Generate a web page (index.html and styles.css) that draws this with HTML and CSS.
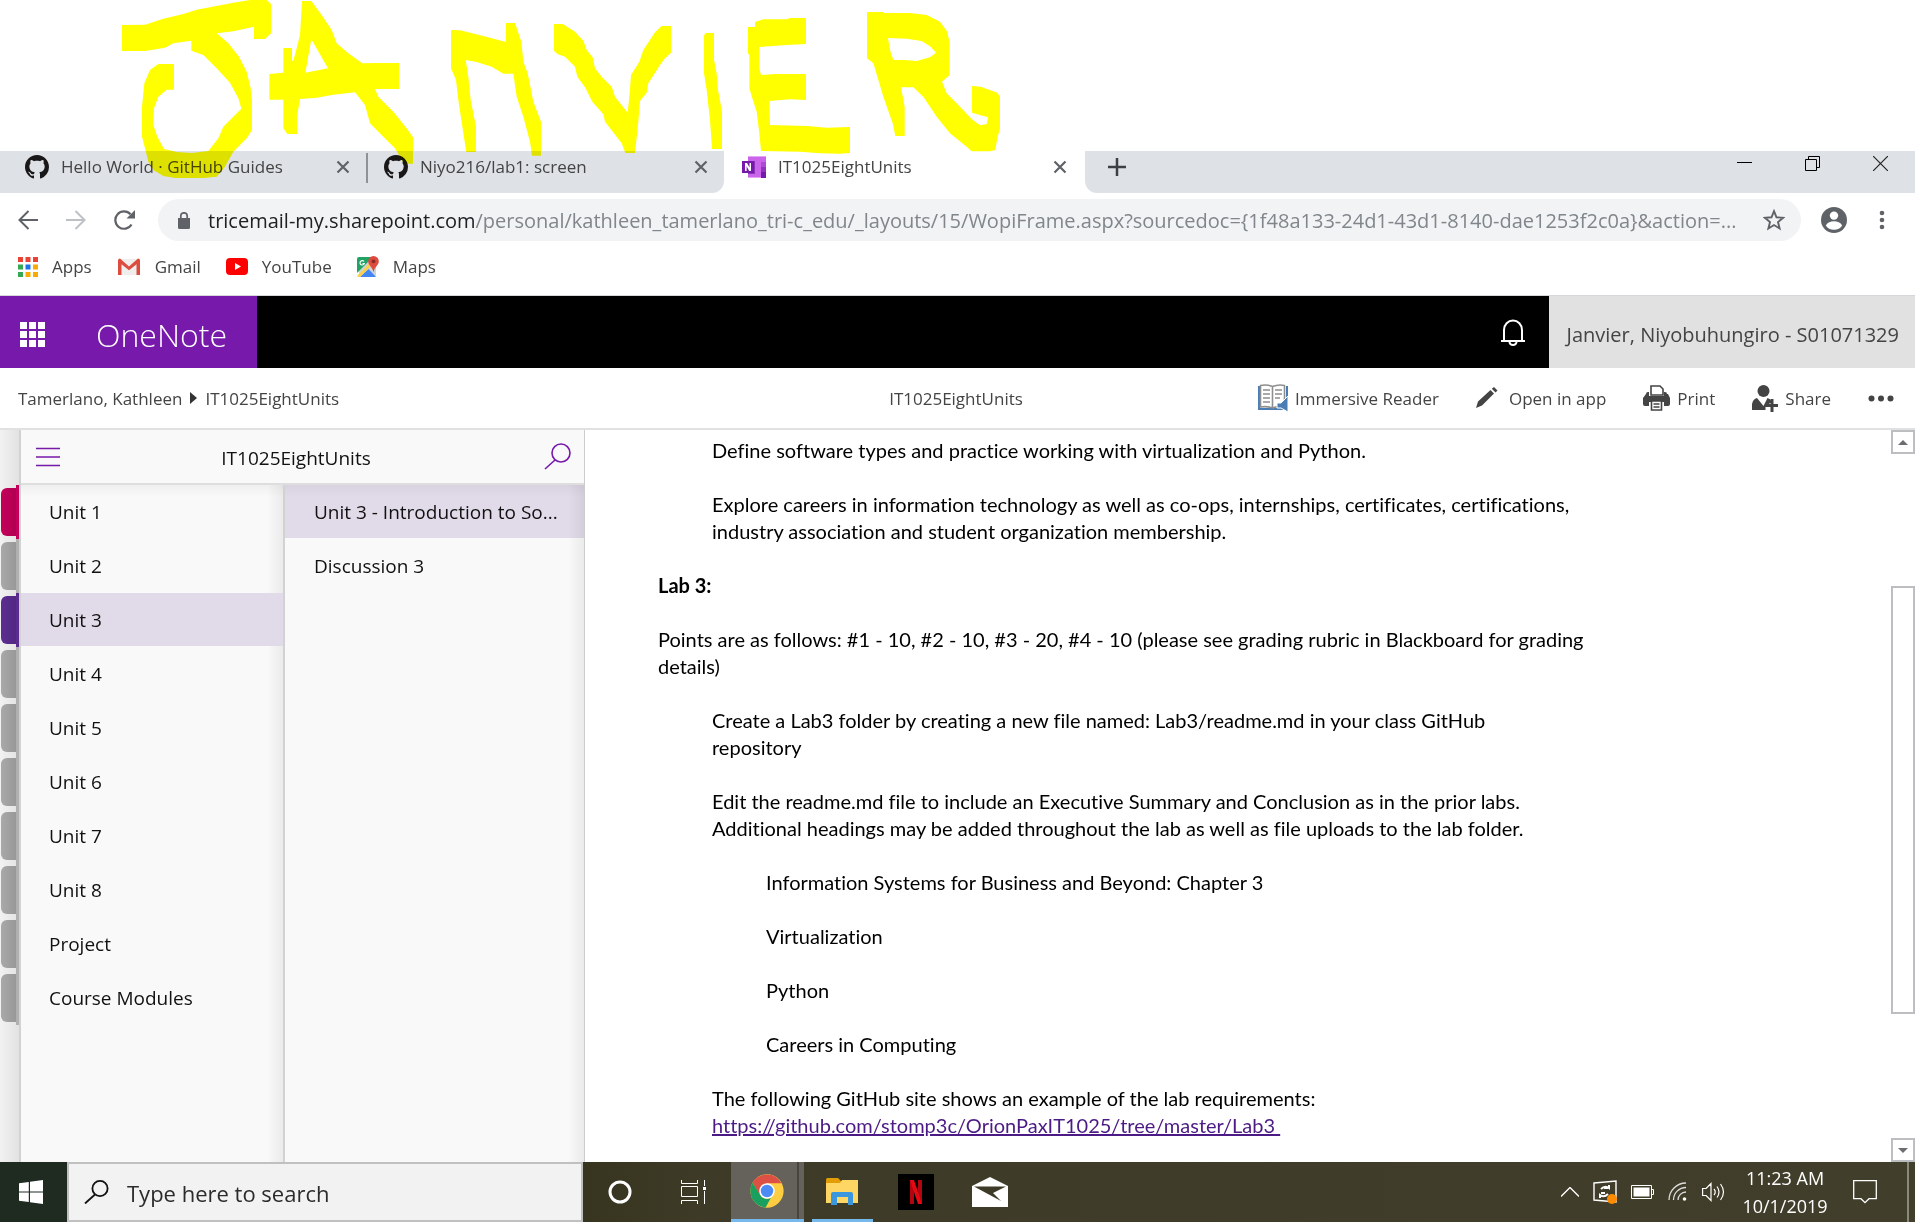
FILE: index.html
```html
<!DOCTYPE html>
<html lang="en">
<head>
<meta charset="utf-8">
<title>IT1025EightUnits</title>
<link rel="stylesheet" href="styles.css">
</head>
<body>
<svg width="0" height="0" class="sprite" aria-hidden="true">
  <symbol id="github" viewBox="0 0 16 16"><path fill="#191717" d="M8 0C3.58 0 0 3.58 0 8c0 3.54 2.29 6.53 5.47 7.59.4.07.55-.17.55-.38 0-.19-.01-.82-.01-1.49-2.01.37-2.53-.49-2.69-.94-.09-.23-.48-.94-.82-1.13-.28-.15-.68-.52-.01-.53.63-.01 1.08.58 1.23.82.72 1.21 1.87.87 2.33.66.07-.52.28-.87.51-1.07-1.78-.2-3.64-.89-3.64-3.95 0-.87.31-1.59.82-2.15-.08-.2-.36-1.02.08-2.12 0 0 .67-.21 2.2.82.64-.18 1.32-.27 2-.27s1.36.09 2 .27c1.53-1.04 2.2-.82 2.2-.82.44 1.1.16 1.92.08 2.12.51.56.82 1.27.82 2.15 0 3.07-1.87 3.75-3.65 3.95.29.25.54.73.54 1.48 0 1.07-.01 1.93-.01 2.2 0 .21.15.46.55.38A8.01 8.01 0 0 0 16 8c0-4.42-3.58-8-8-8z"/></symbol>
  <symbol id="cross" viewBox="0 0 14 14"><path d="M1.500 1.500l11 11M12.500 1.500l-11 11" stroke="#5f6368" stroke-width="2.200" fill="none"/></symbol>
</svg>

<svg class="ink" viewBox="0 0 2745 600" aria-hidden="true">
  <g fill="#ff0" fill-rule="evenodd">
    <path d="M66 75L135 74 190 56 250 42 290 29 400 8 450 0H500L513 12V100L495 117H462V80L400 94 350 100 385 130 417 170 440 215 452 265 456 300V390L440 415 400 455 375 500 350 530 310 534H225L190 528 160 510 145 485 135 445 126 410V320L133 250 150 210 175 192H222V269H200L175 290 162 325 159 372 172 410 192 447 230 456 275 459 325 453 355 415 370 380 424 326 415 295 390 248 350 205 310 165 274 152V122L220 130 195 143 135 153H66z"/>
    <path d="M606 3H634L665 45 695 90 710 130 745 160 787 190 830 189H897V267H825L835 290 880 335 920 385 939 412V491H912L885 445 850 410 810 370 795 315 765 277 700 284 650 293 600 297 591 350V402H562L550 385V299H508V222L550 218V144H576V182H580L590 145 600 105zM634 118L684 205 616 218z"/>
    <path d="M1053 90L1080 91 1150 108 1218 126V69H1245L1264 125 1270 185 1283 220 1300 305 1323 365V467H1296L1290 425 1270 350 1250 290 1240 221H1210L1175 200 1130 186 1097 180 1105 230 1112 300 1128 380V456H1099L1090 400 1075 300 1068 240 1053 205z"/>
    <g transform="translate(1380)">
      <path d="M-18 72H8L45 95 70 122 80 150 98 172 105 205 125 230 155 260 165 290 203 338 208 290 213 225 238 185 250 150 285 97 305 78H333V158L315 175 300 195 265 250 260 278 240 303 235 365 225 459H196L185 430 135 365 130 343 97 305 75 262 52 230 45 200 15 170-8 162-18 152z"/>
      <path d="M436 99H462V180L470 220 474 270 486 335V447H456L450 360 440 270 432 220V108z"/>
      <path d="M564 81H585V66L610 58H680L690 54H738V132L680 135 598 141V205L603 225 645 222H738V300L690 298 628 303 630 375 742 378 800 383 870 381V459L840 461 780 460 720 455 603 453 598 400 590 335 577 295 568 265V165L564 160z"/>
      <path d="M921 36H970L972 39H1050L1100 45 1140 65 1162 95 1169 130V225L1146 245 1160 280 1195 315 1235 357 1260 376 1280 372 1284 352 1262 346 1236 338V258L1262 260 1312 278 1320 290V385L1312 415 1306 450 1290 454H1235L1220 440 1170 400 1130 350 1090 290 1060 262H1023L1034 320V408H1006L998 370 970 290 940 190 921 175zM984 114L1040 116 1085 123 1112 140 1128 158 1110 172 1070 183 1035 180H1000L990 150z"/>
    </g>
  </g>
</svg>

<header class="browser">
  <div class="tabstrip">
    <div class="tab tab-first">
      <svg class="favicon"><use href="#github"/></svg>
      <a class="tab-title" href="#">Hello World · GitHub Guides</a>
      <button class="close" aria-label="Close tab"><svg width="14" height="14"><use href="#cross"/></svg></button>
    </div>
    <div class="tab tab-second">
      <svg class="favicon"><use href="#github"/></svg>
      <a class="tab-title" href="#">Niyo216/lab1: screen</a>
      <button class="close" aria-label="Close tab"><svg width="14" height="14"><use href="#cross"/></svg></button>
    </div>
    <div class="tab tab-active">
      <svg class="favicon" viewBox="0 0 24 24"><path fill="#ca64ea" d="M6 1h18v22H6z"/><path fill="#e3a4f5" d="M6 1h18v1H6zM6 22h13v1H6z"/><path fill="#ae4bd5" d="M19 7h5v5h-5z"/><path fill="#9332bf" d="M19 12h5v5h-5z"/><path fill="#7719aa" d="M19 17h5v6h-5z"/><path fill="#8d34bd" d="M6 6h7v13H6z"/><path fill="#7719aa" d="M0 6h12v12H0z"/><path fill="#fff" d="M3 8h2l2.500 4.500V8H9v8H7.200L4.600 11.300V16H3z"/></svg>
      <a class="tab-title" href="#">IT1025EightUnits</a>
      <button class="close" aria-label="Close tab"><svg width="14" height="14"><use href="#cross"/></svg></button>
    </div>
    <div class="tab-rest">
      <button aria-label="New tab"><svg width="18" height="18"><path d="M9 0v18M0 9h18" stroke="#3c4043" stroke-width="2.500"/></svg></button>
      <div class="window-buttons">
        <button aria-label="Minimize"><svg width="15" height="15"><path d="M0 6.500h15" stroke="#000"/></svg></button>
        <button aria-label="Restore"><svg width="15" height="15" fill="none" stroke="#000"><path d="M.500 3.500h11v11H.500zM3.500 3V.500h11v11H12"/></svg></button>
        <button aria-label="Close"><svg width="15" height="15"><path d="M0 0l15 15M15 0L0 15" stroke="#222" stroke-width="1.200"/></svg></button>
      </div>
    </div>
  </div>

  <div class="toolbar">
    <button aria-label="Back"><svg width="20" height="20" fill="none" stroke="#5f6368" stroke-width="2"><path d="M20 10H2M10.500 1L1.500 10l9 9"/></svg></button>
    <button aria-label="Forward"><svg width="20" height="20" fill="none" stroke="#bdc1c6" stroke-width="2"><path d="M0 10h18M9.500 1l9 9-9 9"/></svg></button>
    <button aria-label="Reload"><svg width="22" height="20"><path d="M17.500 14.500A8.700 8.700 0 1 1 16.500 4.200" fill="none" stroke="#5f6368" stroke-width="2.200"/><path d="M21 0v8.500h-8.500z" fill="#5f6368"/></svg></button>
    <div class="address">
      <svg width="12" height="17"><path d="M0 6h12v9.500q0 1.500-1.500 1.500h-9Q0 17 0 15.500z" fill="#5f6368"/><path d="M2.800 7V4a3.200 3.200 0 0 1 6.400 0v3" fill="none" stroke="#5f6368" stroke-width="1.700"/></svg>
      <div class="url" role="textbox" aria-label="Address" contenteditable="true" spellcheck="false"><span class="host">tricemail-my.sharepoint.com</span>/personal/kathleen_tamerlano_tri-c_edu/_layouts/15/WopiFrame.aspx?sourcedoc={1f48a133-24d1-43d1-8140-dae1253f2c0a}&amp;action=...</div>
      <button aria-label="Bookmark"><svg width="22" height="22" viewBox="0 0 22 22"><path d="M11 2.200l2.500 6.100 6.600.500-5.100 4.300 1.600 6.400L11 16l-5.600 3.500L7 13.100 1.900 8.800l6.600-.500z" fill="none" stroke="#5f6368" stroke-width="1.900"/></svg></button>
    </div>
    <button class="profile" aria-label="Profile"><svg width="26" height="26"><circle cx="13" cy="13" r="13" fill="#5f6368"/><circle cx="13" cy="8.600" r="4.200" fill="#fff"/><path d="M4.800 18.500c1.500-3 5-4.300 8.200-4.300s6.700 1.300 8.200 4.300A9.800 9.800 0 0 1 13 22.800a9.800 9.800 0 0 1-8.200-4.300z" fill="#fff"/></svg></button>
    <button aria-label="Menu"><svg width="6" height="20" fill="#5f6368"><circle cx="3" cy="3" r="2.300"/><circle cx="3" cy="10" r="2.300"/><circle cx="3" cy="17" r="2.300"/></svg></button>
  </div>

  <nav class="bookmarks">
    <a href="#"><svg width="20" height="20"><path fill="#ea4335" d="M0 0h5v5H0zM7.500 0h5v5h-5zM15 0h5v5h-5z"/><path fill="#34a853" d="M0 7.500h5v5H0zM0 15h5v5H0z"/><path fill="#1a73e8" d="M7.500 7.500h5v5h-5z"/><path fill="#f9ab00" d="M15 7.500h5v5h-5zM7.500 15h5v5h-5zM15 15h5v5h-5z"/></svg>Apps</a>
    <a href="#"><svg width="24" height="18"><path fill="#f0eded" d="M3 1h18v16H3z"/><path fill="#dd4b3e" d="M1 17V2.500Q1 .500 3 .500L12 8.500l9-8q2 0 2 2V17h-3.500V6.200L12 12.300 4.500 6.200V17z"/></svg>Gmail</a>
    <a href="#"><svg width="22" height="17"><rect width="22" height="17" rx="4" fill="#f00"/><path fill="#fff" d="M9 5l6 3.500L9 12z"/></svg>YouTube</a>
    <a href="#"><svg width="22" height="22"><path fill="#cfd3d7" d="M2 2h17v18H2z"/><path fill="#1fa463" d="M0 3q0-2 2-2h14L0 17z"/><path fill="#4285f4" d="M3 21l8.500-8 7.500 8z"/><path fill="#fbd14b" d="M0 20L15 4.500l2 2.500L3 21H1z"/><path fill="#dd4b3e" d="M16.500 0a5.300 5.300 0 0 1 5.300 5.300c0 4-4.300 5.700-5.300 11-1-5.300-5.300-7-5.300-11A5.300 5.300 0 0 1 16.500 0z"/><circle cx="16.500" cy="5.300" r="1.900" fill="#8c2a20"/><path d="M7 5.500a2.200 2.200 0 1 0 .300 2H5.500" fill="none" stroke="#fff" stroke-width="1.100"/></svg>Maps</a>
  </nav>
</header>

<header class="suite">
  <div class="brand">
    <button aria-label="App launcher"><svg width="25" height="25" fill="#fff"><path d="M0 0h7v7H0zM9 0h7v7H9zM18 0h7v7h-7zM0 9h7v7H0zM9 9h7v7H9zM18 9h7v7h-7zM0 18h7v7H0zM9 18h7v7H9zM18 18h7v7h-7z"/></svg></button>
    <a href="#">OneNote</a>
  </div>
  <button class="bell" aria-label="Notifications"><svg width="24" height="27" fill="none" stroke="#fff" stroke-width="2"><path d="M3 22V11a9 9.500 0 0 1 18 0v11M0 22h24M8.500 23a3.500 3 0 0 0 7 0"/></svg></button>
  <button class="account">Janvier, Niyobuhungiro - S01071329</button>
</header>

<div class="commands">
  <nav class="crumbs"><a href="#">Tamerlano, Kathleen</a><svg width="7" height="12"><path d="M0 0l7 6-7 6z" fill="#333"/></svg><a href="#">IT1025EightUnits</a></nav>
  <div class="doc-name">IT1025EightUnits</div>
  <div class="actions">
    <button class="reader"><svg width="30" height="28"><path fill="#4a7db5" d="M0 2h30v24H0z"/><path fill="#fff" d="M2 1q7-1.500 13 1 6-2.500 13-1v23H2z"/><path d="M2.500 1.500q6-1.500 12 1 6-2.500 12-1V23q-6-1-12 1-6-2-12-1zM14.500 2.500V24M5 6h7M5 10h7M5 14h7M5 18h7M17 6h7M17 10h7M17 14h5" fill="none" stroke="#8f8f8f" stroke-width="1.600"/><path d="M19 19h4l7-7v16l-7-4h-4z" fill="#4a7db5" stroke="#fff"/></svg>Immersive Reader</button>
    <button class="open"><svg width="22" height="22" fill="#444"><path d="M0 21l2-6.500L14.500 3 18 6.500 6 18.500zM15.800 1.800L18 0l3.500 3.500-2 2z"/></svg>Open in app</button>
    <button class="print"><svg width="27" height="26"><path fill="#444" d="M3 9q0-2 2-2h1v4h15V7h1q2 0 2 2h1l2 4v6q0 2-2 2h-4v-4H6v4H2q-2 0-2-2v-6z"/><path d="M8 10V1h9l3 3v6zM8.500 16h10v9h-10zM10.500 19h6M10.500 22h6" fill="#fff" stroke="#444" stroke-width="1.600"/></svg>Print</button>
    <button class="share"><svg width="26" height="27"><circle cx="11.500" cy="6" r="6" fill="#444"/><path fill="#444" d="M0 25v-6q1-5 5-6l6.500 8 4-8q3 1 4 3v2h-2v3h-4v4z"/><path d="M20 14v13M13 20.500h13" stroke="#444" stroke-width="3"/></svg>Share</button>
    <button class="more" aria-label="More"><svg width="26" height="7" fill="#444"><circle cx="3.500" cy="3.500" r="3"/><circle cx="13" cy="3.500" r="3"/><circle cx="22.500" cy="3.500" r="3"/></svg></button>
  </div>
</div>

<main class="workspace">
  <div class="strip" aria-hidden="true">
    <i class="mark red"></i><i class="mark"></i><i class="mark violet"></i><i class="mark"></i><i class="mark"></i><i class="mark"></i><i class="mark"></i><i class="mark"></i><i class="mark"></i><i class="mark"></i>
  </div>
  <aside class="navigation">
    <div class="nav-head">
      <button aria-label="Notebooks"><svg width="24" height="20" stroke="#7719aa" stroke-width="1.500"><path d="M0 1.500h24M0 10h24M0 18.500h24"/></svg></button>
      <h2>IT1025EightUnits</h2>
      <button aria-label="Search"><svg width="27" height="27" fill="none" stroke="#7719aa" stroke-width="1.600"><circle cx="17" cy="10" r="9"/><path d="M11 17l-10 9"/></svg></button>
    </div>
    <nav class="sections">
      <a href="#">Unit 1</a><a href="#">Unit 2</a><a href="#" class="selected">Unit 3</a><a href="#">Unit 4</a><a href="#">Unit 5</a><a href="#">Unit 6</a><a href="#">Unit 7</a><a href="#">Unit 8</a><a href="#">Project</a><a href="#">Course Modules</a>
    </nav>
    <nav class="pages">
      <a href="#" class="selected">Unit 3 - Introduction to So...</a><a href="#">Discussion 3</a>
    </nav>
  </aside>
  <article class="note">
    <p class="in1">Define software types and practice working with virtualization and Python.</p>
    <p class="in1">Explore careers in information technology as well as co-ops, internships, certificates, certifications,<br>industry association and student organization membership.</p>
    <p><strong>Lab 3:</strong></p>
    <p>Points are as follows: #1 - 10, #2 - 10, #3 - 20, #4 - 10 (please see grading rubric in Blackboard for grading<br>details)</p>
    <p class="in1">Create a Lab3 folder by creating a new file named: Lab3/readme.md in your class GitHub<br>repository</p>
    <p class="in1">Edit the readme.md file to include an Executive Summary and Conclusion as in the prior labs.<br>Additional headings may be added throughout the lab as well as file uploads to the lab folder.</p>
    <p class="in2">Information Systems for Business and Beyond: Chapter 3</p>
    <p class="in2">Virtualization</p>
    <p class="in2">Python</p>
    <p class="in2">Careers in Computing</p>
    <p class="in1">The following GitHub site shows an example of the lab requirements:<br><a href="#">https://github.com/stomp3c/OrionPaxIT1025/tree/master/Lab3&nbsp;</a></p>
  </article>
  <div class="scrollbar">
    <button aria-label="Scroll up"><svg width="10" height="5"><path d="M0 5l5-5 5 5z" fill="#6d6d6d"/></svg></button>
    <div class="thumb"></div>
    <button class="down" aria-label="Scroll down"><svg width="10" height="5"><path d="M0 0l5 5 5-5z" fill="#6d6d6d"/></svg></button>
  </div>
</main>

<footer class="taskbar">
  <button class="start" aria-label="Start"><svg width="24" height="24" fill="#fff"><path d="M0 3.300L9.800 2v9.500H0zM11 1.800L24 0v11.500H11zM0 12.600h9.800V22L0 20.700zM11 12.600h13V24l-13-1.800z"/></svg></button>
  <label class="search"><svg width="25" height="24" fill="none" stroke="#111" stroke-width="1.800"><circle cx="16" cy="8.500" r="7.600"/><path d="M11 14.500L1 23.500"/></svg><input type="text" placeholder="Type here to search" aria-label="Search Windows"></label>
  <div class="apps">
    <button class="app" aria-label="Cortana"><svg width="24" height="24"><circle cx="12" cy="12" r="10" fill="none" stroke="#fff" stroke-width="3"/></svg></button>
    <button class="app" aria-label="Task view"><svg width="25" height="24" fill="none" stroke="#fff"><path d="M.500 0v3.500h16V0M.500 6.500h16v10H.500zM.500 24v-3.500h16V24M23.500 0v6M23.500 11v13"/><path fill="#fff" d="M22 7h3v3h-3z" stroke="none"/></svg></button>
    <button class="app chrome" aria-label="Chrome"><svg width="34" height="34" viewBox="0 0 48 48"><circle cx="24" cy="24" r="23.500" fill="#ffcd41"/><path fill="#dd5044" d="M3.600 12.300A23.500 23.500 0 0 1 44.400 13H24L14 30z"/><path fill="#19a05e" d="M3.600 12.300l10.900 17.200a11 11 0 0 0 15 4L22 47.400A23.500 23.500 0 0 1 3.600 12.300z"/><circle cx="24" cy="24" r="11" fill="#fff"/><circle cx="24" cy="24" r="8.800" fill="#4c8bf5"/></svg></button>
    <button class="app explorer" aria-label="File Explorer"><svg width="32" height="28"><path fill="#e19c06" d="M0 1.500Q0 0 1.500 0H12l3 3v4H0z"/><path fill="#fdd663" d="M0 5h14l2-3h16v23H0z"/><path fill="#3a96dd" d="M5 27V16q0-2 2-2h18q2 0 2 2v11h-5v-8H11v8z"/></svg></button>
    <button class="app" aria-label="Netflix"><svg width="36" height="36"><path d="M0 0h36v36H0z"/><path fill="#b1060f" d="M12 6h4v24h-4zM20 6h4v24h-4z"/><path fill="#e50914" d="M12 6h4l8 24h-4z"/></svg></button>
    <button class="app" aria-label="Mail"><svg width="36" height="30"><path fill="#fff" d="M0 9L18 0l18 9v21H0z"/><path fill="#3d3a27" d="M2 9.500h32L21 16l8 8z"/></svg></button>
  </div>
  <div class="tray">
    <svg width="18" height="10" fill="none" stroke="#fff" stroke-width="1.400"><path d="M0 9.500l9-9 9 9"/></svg>
    <svg width="24" height="24" fill="none" stroke="#fff" stroke-width="1.400"><path d="M1 3l22-2v21L1 20z"/><path stroke-width="2" d="M8 9q4-4 8-1V5M15 8h-4M15 14q-4 4-8 1v3M8 13h4"/><circle cx="19" cy="19" r="5" fill="#ff8c00" stroke="none"/></svg>
    <svg width="23" height="14" fill="#fff"><path d="M.500.500h20v13H.500zM21 4.500h1.500v5H21" fill="none" stroke="#fff"/><path d="M2.500 2.500h16v9h-16z"/></svg>
    <svg width="20" height="20" fill="none" stroke="#ddd" stroke-width="1.300"><path d="M1 18A17 17 0 0 1 18 1M5.500 18A12.500 12.500 0 0 1 18 5.500M10 18a8 8 0 0 1 8-8"/><circle cx="16.500" cy="17" r="1.800" fill="#fff" stroke="none"/></svg>
    <svg width="23" height="20" fill="none" stroke="#fff" stroke-width="1.200"><path d="M.600 6.500h3.500L9 1.500v17L4.100 13.500H.600zM12 7q2.500 3 0 6M15 4.500q4 5.500 0 11M18.500 2q6 8 0 16"/></svg>
    <time>11:23 AM<br>10/1/2019</time>
    <svg class="notice" width="24" height="24" fill="none" stroke="#fff" stroke-width="1.300"><path d="M.700.700h22.600v18H16l-4 4-4-4H.700z"/></svg>
  </div>
</footer>
</body>
</html>
```
FILE: styles.css
```css
* { box-sizing: border-box; }

body {
  margin: 0;
  min-height: 100vh;
  display: flex;
  flex-direction: column;
  position: relative;
  background: #fff;
  font-family: "Open Sans", "Noto Sans", sans-serif;
  font-size: 17px;
  color: #444;
}

button {
  display: flex;
  align-items: center;
  justify-content: center;
  padding: 0;
  border: 0;
  background: none;
  font: inherit;
  color: inherit;
}

a { color: inherit; text-decoration: none; }
svg { flex: none; display: block; }
.sprite { position: absolute; }

/* highlighter strokes over the window */
.ink {
  position: absolute;
  left: 100px;
  top: 0;
  width: 915px;
  height: 200px;
  z-index: 2;
  mix-blend-mode: multiply;
  pointer-events: none;
}

/* browser chrome */
.browser { padding-top: 151px; border-bottom: 1px solid #d5d7da; }
.tabstrip { display: flex; height: 42px; }
.tab {
  display: flex;
  align-items: center;
  padding: 0 16px 11px 18px;
  background: #dee1e6;
}
.tab-first { width: 366px; padding-left: 25px; }
.tab-second { width: 358px; border-bottom-right-radius: 12px; position: relative; }
.tab-second::before {
  content: "";
  position: absolute;
  left: 0;
  top: 2px;
  width: 2px;
  height: 30px;
  background: #8f9296;
}
.tab-active { width: 361px; padding-right: 18px; background: #fff; }
.favicon { width: 24px; height: 24px; margin-right: 12px; }
.tab-title { flex: 1; white-space: nowrap; }
.tab-rest {
  flex: 1;
  display: flex;
  justify-content: space-between;
  align-items: center;
  padding: 0 27px 10px 23px;
  background: #dee1e6;
  border-bottom-left-radius: 12px;
}
.window-buttons { display: flex; gap: 53px; padding-bottom: 8px; }

.toolbar {
  display: flex;
  align-items: center;
  height: 54px;
  padding: 0 30px 0 18px;
  gap: 28px;
}
.address {
  flex: 1;
  min-width: 0;
  display: flex;
  align-items: center;
  height: 42px;
  margin: 0 -8px 0 -6px;
  padding: 0 16px 0 20px;
  border-radius: 21px;
  background: #f1f3f4;
}
.url { flex: 1; min-width: 0; margin-left: 18px; overflow: hidden; white-space: nowrap; font-size: 20px; color: #80868b; }
.host { color: #202124; }
.profile { margin-right: 4px; }

.bookmarks { display: flex; gap: 25px; height: 48px; padding: 0 18px 9px; align-items: center; }
.bookmarks a { display: flex; align-items: center; gap: 14px; }

/* suite bar */
.suite { display: flex; height: 72px; background: #000; }
.brand { display: flex; align-items: center; gap: 51px; width: 257px; padding: 4px 0 0 20px; background: #7719aa; color: #fff; font-size: 32px; font-weight: 300; }
.bell { margin-left: auto; margin-right: 24px; }
.account { padding: 4px 16px 0 18px; background: #e1e1e1; font-size: 20px; }

/* command bar */
.commands {
  display: grid;
  grid-template-columns: 1fr auto 1fr;
  align-items: center;
  height: 62px;
  padding: 0 21px 0 18px;
  border-bottom: 2px solid #e1e1e1;
}
.crumbs { display: flex; align-items: center; gap: 8px; }
.actions { display: flex; justify-content: flex-end; gap: 37px; }
.actions button { gap: 7px; white-space: nowrap; }
.actions .open { gap: 11px; }

/* notebook */
.workspace { flex: 1; display: flex; background: #fff; }
.strip { width: 19px; padding-top: 55px; background: linear-gradient(to right, #f2f2f2, #e2e2e2); }
.mark { display: block; height: 54px; padding: 3px 0 3px 1px; border-right: 3px solid #b0b0b0; color: #a9a9a9; }
.mark::before { content: ""; display: block; height: 48px; border-radius: 6px 0 0 6px; background: linear-gradient(to right, transparent, rgba(0, 0, 0, .1)) currentColor; }
.red { color: #c4005b; border-color: #c4005b; }
.violet { color: #5c2d91; border-color: #5c2d91; }

.navigation {
  width: 566px;
  display: grid;
  grid-template-columns: 264px 1fr;
  grid-template-rows: 55px 1fr;
  border-left: 2px solid #d2d2d2;
  border-right: 1px solid #ccc;
  background: #f9f9f9;
  color: #111;
}
.nav-head { grid-column: 1 / 3; display: flex; align-items: center; justify-content: space-between; padding: 0 13px 0 15px; border-bottom: 2px solid #dedede; }
.nav-head h2 { margin: 0; padding: 2px 12px 0 0; font-size: 19px; font-weight: 400; }
.sections, .pages {
  font-size: 19px;
  background: linear-gradient(to left, rgba(0, 0, 0, .06), transparent 16px), linear-gradient(rgba(0, 0, 0, .04), transparent 12px);
}
.sections { border-right: 2px solid #d2d2d2; }
.sections a, .pages a { display: flex; align-items: center; height: 53px; margin-bottom: 1px; padding: 1px 0 0 28px; white-space: nowrap; }
.pages a { padding-left: 29px; }
.selected { background: #e1dbe9; }
.pages .selected { background: linear-gradient(to left, rgba(0, 0, 0, .06), transparent 16px), linear-gradient(rgba(0, 0, 0, .04), transparent 12px), #e1dbe9; }

.note { flex: 1; padding: 7px 20px 0 73px; font-family: Lato, sans-serif; font-size: 20px; font-variant-ligatures: none; line-height: 27px; color: #000; white-space: nowrap; }
.note p { margin: 0 0 27px; }
.note p:last-child { margin: 0; }
.note .in1 { padding-left: 54px; }
.note .in2 { padding-left: 108px; }
.note a { color: #4b1a85; text-decoration: underline; }

.scrollbar { width: 24px; display: grid; grid-template-rows: 24px 132fr 428fr 124fr 24px; }
.scrollbar button, .thumb { border: 2px solid #bcbfc2; background: #fff; }
.thumb { grid-row: 3; }
.down { grid-row: 5; }

/* taskbar */
.taskbar { display: flex; height: 60px; background: linear-gradient(to right, #1f2a20 67px, #37351f 583px, #3d3a27 700px, #413e2b); color: #fff; }
.start { width: 67px; padding-right: 6px; }
.search { width: 516px; display: flex; align-items: center; gap: 18px; padding-left: 15px; border: 2px solid #c0c0c0; background: #f2f2f2; }
.search input { flex: 1; border: 0; outline: 0; padding: 2px 0 0; background: none; font: inherit; font-size: 22px; }
.search input::placeholder { color: #2b2b2b; opacity: 1; }
.apps { display: flex; gap: 1px; }
.app { width: 73px; }
.chrome { background: linear-gradient(to right, transparent 66px, rgba(0, 0, 0, .3) 66px, rgba(0, 0, 0, .3) 68px, transparent 68px), #64625a; border-bottom: 3px solid #76b9ed; padding-right: 1px; }
.explorer { background: linear-gradient(#76b9ed, #76b9ed) 7px 100% / 61px 3px no-repeat; }
.tray {
  margin-left: auto;
  display: flex;
  align-items: center;
  gap: 14px;
  padding-right: 38px;
  background: linear-gradient(#8a8879, #8a8879) calc(100% - 6px) 0 / 2px 100% no-repeat;
}
.tray time { width: 92px; font-size: 18px; line-height: 28px; text-align: center; white-space: nowrap; }
.notice { margin-left: 8px; }
```
